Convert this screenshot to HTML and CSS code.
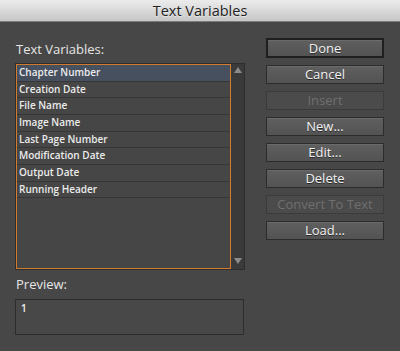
FILE: index.html
```html
<!DOCTYPE html>
<html>
<head>
<meta charset="utf-8">
<link rel="stylesheet" href="styles.css">
</head>
<body>
<div class="dialog">
  <div class="titlebar">Text Variables</div>
  <div class="content">
    <div class="left">
      <div class="label">Text Variables:</div>
      <div class="listwrap">
        <div class="list">
          <div class="row selected">Chapter Number</div>
          <div class="row">Creation Date</div>
          <div class="row">File Name</div>
          <div class="row">Image Name</div>
          <div class="row">Last Page Number</div>
          <div class="row">Modification Date</div>
          <div class="row">Output Date</div>
          <div class="row">Running Header</div>
        </div>
        <div class="scrollbar">
          <span class="arrow up"></span>
          <span class="arrow down"></span>
        </div>
      </div>
      <div class="label preview-label">Preview:</div>
      <div class="preview">1</div>
    </div>
    <div class="buttons">
      <div class="btn default">Done</div>
      <div class="btn">Cancel</div>
      <div class="btn disabled">Insert</div>
      <div class="btn">New...</div>
      <div class="btn">Edit...</div>
      <div class="btn">Delete</div>
      <div class="btn disabled">Convert To Text</div>
      <div class="btn">Load...</div>
    </div>
  </div>
</div>
</body>
</html>
```
FILE: styles.css
```css
html, body {
  margin: 0;
  padding: 0;
  width: 400px;
  height: 351px;
  overflow: hidden;
  background: #474747;
}
.dialog {
  width: 400px;
  height: 351px;
  display: flex;
  flex-direction: column;
  font-family: "Open Sans", "DejaVu Sans", sans-serif;
  background: #474747;
}
.titlebar {
  height: 21px;
  line-height: 21px;
  text-align: center;
  font-size: 14.5px;
  font-weight: 500;
  color: #222222;
  background: linear-gradient(#ececec, #c6c6c6);
  border-bottom: 1px solid #7c7c7c;
  text-shadow: 0 1px 0 rgba(255,255,255,0.5);
}
.content {
  display: flex;
  padding: 17px 16px 0 15px;
  gap: 21px;
}
.left {
  width: 230px;
  display: flex;
  flex-direction: column;
}
.label {
  height: 20px;
  line-height: 20px;
  padding-bottom: 4px;
  font-size: 13px;
  color: #e6e6e6;
  padding-left: 1px;
}
.listwrap {
  height: 205px;
  border: 1px solid #2e2e2e;
  display: flex;
  background: #3c3c3c;
}
.list {
  width: 213px;
  border: 1px solid #d27b2e;
  background: #464646;
  overflow: hidden;
}
.row {
  height: 15.67px;
  line-height: 15.67px;
  border-bottom: 1px solid #363636;
  font-size: 10px;
  font-weight: 600;
  color: #ececec;
  padding-left: 2px;
  white-space: nowrap;
}
.row.selected {
  background: #46505f;
}
.scrollbar {
  flex: 1;
  position: relative;
  background: #3a3a3a;
}
.arrow {
  position: absolute;
  left: 3px;
  width: 0;
  height: 0;
  border-left: 4px solid transparent;
  border-right: 4px solid transparent;
}
.arrow.up {
  top: 3px;
  border-bottom: 6px solid #8a8a8a;
}
.arrow.down {
  bottom: 5px;
  border-top: 6px solid #8a8a8a;
}
.preview-label {
  margin-top: 4px;
  height: 20px;
  line-height: 20px;
  padding-bottom: 5px;
}
.preview {
  height: 36px;
  border: 1px solid #2c2c2c;
  background: #484848;
  font-size: 10px;
  font-weight: 600;
  color: #eeeeee;
  padding: 1px 5px;
  box-sizing: border-box;
  width: 229px;
}
.buttons {
  width: 118px;
  display: flex;
  flex-direction: column;
  gap: 7px;
  padding-top: 0;
}
.btn {
  height: 17px;
  line-height: 17px;
  border: 1px solid #2c2c2c;
  background: linear-gradient(#5f5f5f, #535353);
  box-shadow: inset 0 1px 0 rgba(255,255,255,0.08);
  text-align: center;
  font-size: 13px;
  font-weight: 500;
  color: #f2f2f2;
  text-shadow: 0 1px 0 rgba(0,0,0,0.5);
  white-space: nowrap;
}
.btn.default {
  border: 2px solid #1f1f1f;
  height: 16px;
  line-height: 16px;
  margin-top: -1px;
}
.btn.disabled {
  background: #4b4b4b;
  border-color: #3b3b3b;
  color: #6f6f6f;
  text-shadow: none;
  box-shadow: none;
}
```
